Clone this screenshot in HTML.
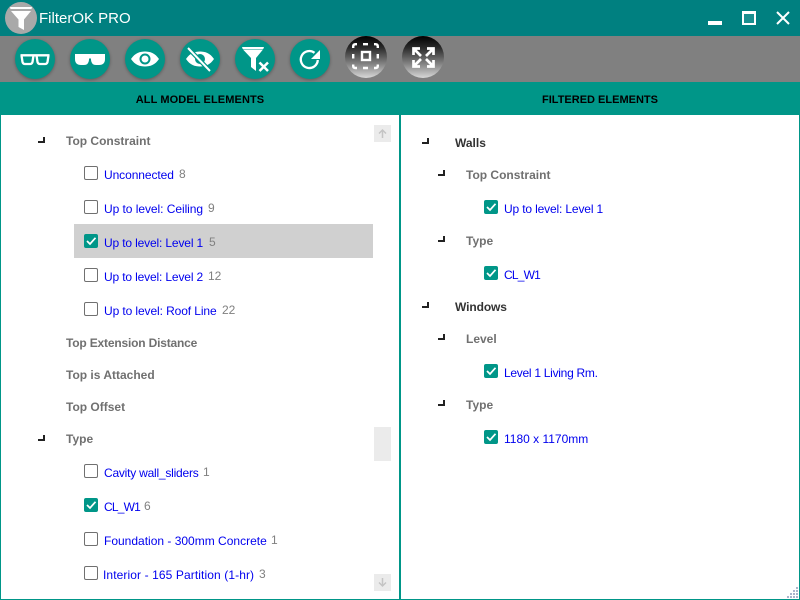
<!DOCTYPE html>
<html><head><meta charset="utf-8"><style>
html,body{margin:0;padding:0}
body{width:800px;height:600px;overflow:hidden;position:relative;background:#fff;font-family:"Liberation Sans",sans-serif}
div,span,svg{position:absolute}
.t{white-space:nowrap;font-size:12px;line-height:16px;color:#0000ee}
.n{white-space:nowrap;font-size:12px;line-height:16px;color:#808080}
.h{white-space:nowrap;font-size:12px;line-height:16px;color:#707070;font-weight:bold}
.k{white-space:nowrap;font-size:12px;line-height:16px;color:#333;font-weight:bold}
.c{width:12px;height:12px;border:1px solid #707070;border-radius:2px;background:#fff}
.d{width:14px;height:14px;background:#009688;border-radius:2px}
.a{width:7px;height:6px}
.b{width:40px;height:40px;border-radius:50%;background:#009688;top:39px;box-shadow:0 1px 3px rgba(0,0,0,.3)}
.g{width:42px;height:42px;border-radius:50%;top:36px;background:linear-gradient(#000 0%,#2a2a2a 28%,#808080 65%,#d8d8d8 100%)}
</style></head><body>
<div style="left:0;top:0;width:800px;height:36px;background:#008080"></div>
<div style="left:0;top:36px;width:800px;height:46px;background:#808080"></div>
<div style="left:0;top:82px;width:800px;height:33px;background:#009688"></div>
<div style="left:5px;top:2px;width:32px;height:32px;border-radius:50%;background:#a9a9a9"></div>
<svg style="left:5px;top:2px" width="32" height="32" viewBox="0 0 32 32"><path d="M5 5H27L26.500 7H5.500ZM6 9H26L19 17.500V28L13.500 25V17.500Z" fill="#fff"/></svg>
<div style="left:39px;top:9px;font-size:15px;line-height:20px;color:#fff;white-space:nowrap">FilterOK PRO</div>
<div style="left:708px;top:21px;width:14px;height:4px;background:#fff"></div>
<div style="left:742px;top:11px;width:10px;height:9px;border:2px solid #fff;border-top-width:3px;background:#1a8f8f"></div>
<svg style="left:776px;top:11px" width="14" height="14" viewBox="0 0 14 14"><path d="M1 1L13 13M13 1L1 13" stroke="#fff" stroke-width="2"/></svg>
<div class="b" style="left:15px"></div>
<svg style="left:15px;top:39px" width="40" height="40" viewBox="0 0 40 40"><path d="M5.500 16.300H34.500M6.500 16.300L7.500 23Q8 25 10 25H15Q17 25 17.500 23L18.500 16.300M33.500 16.300L32.500 23Q32 25 30 25H25Q23 25 22.500 23L21.500 16.300" fill="none" stroke="#fff" stroke-width="2.300"/></svg>
<div class="b" style="left:70px"></div>
<svg style="left:70px;top:39px" width="40" height="40" viewBox="0 0 40 40"><path d="M5 15H35V20Q35 26 29 26H26Q21.500 26 21 21V19.500H19V21Q18.500 26 14 26H11Q5 26 5 20Z" fill="#fff"/></svg>
<div class="b" style="left:125px"></div>
<svg style="left:125px;top:39px" width="40" height="40" viewBox="0 0 40 40"><path fill-rule="evenodd" d="M6 20C10 14 15 12.500 20 12.500S30 14 34 20C30 26 25 27.500 20 27.500S10 26 6 20ZM20 14.500A5.500 5.500 0 1 0 20 25.500A5.500 5.500 0 1 0 20 14.500Z" fill="#fff"/><circle cx="20" cy="20" r="3.500" fill="#fff"/></svg>
<div class="b" style="left:180px"></div>
<svg style="left:180px;top:39px" width="40" height="40" viewBox="0 0 40 40"><path fill-rule="evenodd" d="M6 20C10 14 15 12.500 20 12.500S30 14 34 20C30 26 25 27.500 20 27.500S10 26 6 20ZM20 15A5 5 0 1 0 20 25A5 5 0 1 0 20 15Z" fill="#fff"/><path d="M8 9L30 32" stroke="#009688" stroke-width="4.500"/><path d="M8 9L30 32" stroke="#fff" stroke-width="2"/></svg>
<div class="b" style="left:235px"></div>
<svg style="left:235px;top:39px" width="40" height="40" viewBox="0 0 40 40"><path d="M7 8H29L28.300 10H7.700ZM8 10.500H28L21 19V32L16 28V19Z" fill="#fff"/><path d="M24.500 23.500L33 32M33 23.500L24.500 32" stroke="#fff" stroke-width="2.500"/></svg>
<div class="b" style="left:290px"></div>
<svg style="left:290px;top:39px" width="40" height="40" viewBox="0 0 40 40"><path d="M24.500 13.800A8.500 8.500 0 1 0 27.800 21" fill="none" stroke="#fff" stroke-width="2.300"/><path d="M30 11V20H21Z" fill="#fff"/></svg>
<div class="g" style="left:345px"></div>
<svg style="left:345px;top:36px" width="42" height="42" viewBox="0 0 42 42"><path d="M8.200 12V10.500Q8.200 8.200 10.500 8.200H12M18 8.200H23M29 8.200H30.500Q32.800 8.200 32.800 10.500V12M32.800 18V22.500M32.800 28.500V30Q32.800 32 30.500 32H29M23 32H18M12 32H10.500Q8.200 32 8.200 30V28.500M8.200 22.500V18" fill="none" stroke="#fff" stroke-width="2.400"/><rect x="17" y="16" width="8" height="8" fill="none" stroke="#fff" stroke-width="2.400"/></svg>
<div class="g" style="left:402px"></div>
<svg style="left:402px;top:36px" width="42" height="42" viewBox="0 0 42 42" fill="none" stroke="#fff" stroke-width="2.700"><path d="M11.500 19V12.500H18M12 13L19 20M31.500 19V12.500H25M31 13L24 20M11.500 24V30.500H18M12 30L19 23M31.500 24V30.500H25M31 30L24 23"/></svg>
<div style="left:0;top:92px;width:400px;text-align:center;font-size:11px;line-height:16px;font-weight:bold;color:#000;letter-spacing:.1px">ALL MODEL ELEMENTS</div>
<div style="left:400px;top:92px;width:400px;text-align:center;font-size:11px;line-height:16px;font-weight:bold;color:#000">FILTERED ELEMENTS</div>
<div style="left:0;top:115px;width:1px;height:485px;background:#009688"></div>
<div style="left:799px;top:115px;width:1px;height:485px;background:#009688"></div>
<div style="left:0;top:599px;width:800px;height:1px;background:#009688"></div>
<div style="left:399px;top:115px;width:2px;height:485px;background:#009688"></div>
<div style="left:374px;top:125px;width:17px;height:17px;background:#ebebeb"></div>
<svg style="left:374px;top:125px" width="17" height="17" viewBox="0 0 17 17"><path d="M8.500 13V5M5 8.500L8.500 5L12 8.500" fill="none" stroke="#c4c4c4" stroke-width="1.500"/></svg>
<div style="left:374px;top:427px;width:17px;height:34px;background:#ebebeb"></div>
<div style="left:374px;top:574px;width:17px;height:17px;background:#ebebeb"></div>
<svg style="left:374px;top:574px" width="17" height="17" viewBox="0 0 17 17"><path d="M8.500 4V12M5 8.500L8.500 12L12 8.500" fill="none" stroke="#c4c4c4" stroke-width="1.500"/></svg>
<svg style="left:787px;top:587px" width="12" height="12" fill="#aab4cc"><rect x="9" y="0" width="2" height="2"/><rect x="6" y="3" width="2" height="2"/><rect x="9" y="3" width="2" height="2"/><rect x="3" y="6" width="2" height="2"/><rect x="6" y="6" width="2" height="2"/><rect x="9" y="6" width="2" height="2"/><rect x="0" y="9" width="2" height="2"/><rect x="3" y="9" width="2" height="2"/><rect x="6" y="9" width="2" height="2"/><rect x="9" y="9" width="2" height="2"/></svg>
<div style="left:74px;top:224px;width:299px;height:34px;background:#d0d0d0"></div>

<svg class="a" style="left:38px;top:137px" viewBox="0 0 7 6"><path d="M6 0V5H0" fill="none" stroke="#222" stroke-width="2"/></svg>
<div class="h" style="left:66px;top:133px">Top Constraint</div>
<div class="c" style="left:84px;top:166px"></div><div class="t" style="left:104px;top:167px;letter-spacing:-.08px">Unconnected</div><div class="n" style="left:179px;top:166px">8</div>
<div class="c" style="left:84px;top:200px"></div><div class="t" style="left:104px;top:201px;letter-spacing:-.05px">Up to level: Ceiling</div><div class="n" style="left:208px;top:200px">9</div>
<div class="d" style="left:84px;top:234px"></div><svg style="left:84px;top:234px" width="14" height="14"><path d="M3 7L6 10L11.500 3.800" fill="none" stroke="#fff" stroke-width="1.700"/></svg><div class="t" style="left:104px;top:235px;letter-spacing:-.15px">Up to level: Level 1</div><div class="n" style="left:209px;top:234px">5</div>
<div class="c" style="left:84px;top:268px"></div><div class="t" style="left:104px;top:269px;letter-spacing:-.15px">Up to level: Level 2</div><div class="n" style="left:208px;top:268px">12</div>
<div class="c" style="left:84px;top:302px"></div><div class="t" style="left:104px;top:303px;letter-spacing:-.1px">Up to level: Roof Line</div><div class="n" style="left:222px;top:302px">22</div>
<div class="h" style="left:66px;top:335px;letter-spacing:-.18px">Top Extension Distance</div>
<div class="h" style="left:66px;top:367px">Top is Attached</div>
<div class="h" style="left:66px;top:399px">Top Offset</div>
<svg class="a" style="left:38px;top:435px" viewBox="0 0 7 6"><path d="M6 0V5H0" fill="none" stroke="#222" stroke-width="2"/></svg>
<div class="h" style="left:66px;top:431px">Type</div>
<div class="c" style="left:84px;top:464px"></div><div class="t" style="left:104px;top:465px;letter-spacing:-.22px">Cavity wall_sliders</div><div class="n" style="left:203px;top:464px">1</div>
<div class="d" style="left:84px;top:498px"></div><svg style="left:84px;top:498px" width="14" height="14"><path d="M3 7L6 10L11.500 3.800" fill="none" stroke="#fff" stroke-width="1.700"/></svg><div class="t" style="left:104px;top:499px;letter-spacing:-.8px">CL_W1</div><div class="n" style="left:144px;top:498px">6</div>
<div class="c" style="left:84px;top:532px"></div><div class="t" style="left:104px;top:533px">Foundation - 300mm Concrete</div><div class="n" style="left:271px;top:532px">1</div>
<div class="c" style="left:84px;top:566px"></div><div class="t" style="left:103px;top:567px;letter-spacing:.1px">Interior - 165 Partition (1-hr)</div><div class="n" style="left:259px;top:566px">3</div>

<svg class="a" style="left:422px;top:138px" viewBox="0 0 7 6"><path d="M6 0V5H0" fill="none" stroke="#222" stroke-width="2"/></svg>
<div class="k" style="left:455px;top:135px">Walls</div>
<svg class="a" style="left:438px;top:170px" viewBox="0 0 7 6"><path d="M6 0V5H0" fill="none" stroke="#222" stroke-width="2"/></svg>
<div class="h" style="left:466px;top:167px">Top Constraint</div>
<div class="d" style="left:484px;top:200px"></div><svg style="left:484px;top:200px" width="14" height="14"><path d="M3 7L6 10L11.500 3.800" fill="none" stroke="#fff" stroke-width="1.700"/></svg><div class="t" style="left:504px;top:201px;letter-spacing:-.15px">Up to level: Level 1</div>
<svg class="a" style="left:438px;top:236px" viewBox="0 0 7 6"><path d="M6 0V5H0" fill="none" stroke="#222" stroke-width="2"/></svg>
<div class="h" style="left:466px;top:233px">Type</div>
<div class="d" style="left:484px;top:266px"></div><svg style="left:484px;top:266px" width="14" height="14"><path d="M3 7L6 10L11.500 3.800" fill="none" stroke="#fff" stroke-width="1.700"/></svg><div class="t" style="left:504px;top:267px;letter-spacing:-.8px">CL_W1</div>
<svg class="a" style="left:422px;top:302px" viewBox="0 0 7 6"><path d="M6 0V5H0" fill="none" stroke="#222" stroke-width="2"/></svg>
<div class="k" style="left:455px;top:299px;letter-spacing:-.1px">Windows</div>
<svg class="a" style="left:438px;top:334px" viewBox="0 0 7 6"><path d="M6 0V5H0" fill="none" stroke="#222" stroke-width="2"/></svg>
<div class="h" style="left:466px;top:331px">Level</div>
<div class="d" style="left:484px;top:364px"></div><svg style="left:484px;top:364px" width="14" height="14"><path d="M3 7L6 10L11.500 3.800" fill="none" stroke="#fff" stroke-width="1.700"/></svg><div class="t" style="left:504px;top:365px;letter-spacing:-.28px">Level 1 Living Rm.</div>
<svg class="a" style="left:438px;top:400px" viewBox="0 0 7 6"><path d="M6 0V5H0" fill="none" stroke="#222" stroke-width="2"/></svg>
<div class="h" style="left:466px;top:397px">Type</div>
<div class="d" style="left:484px;top:430px"></div><svg style="left:484px;top:430px" width="14" height="14"><path d="M3 7L6 10L11.500 3.800" fill="none" stroke="#fff" stroke-width="1.700"/></svg><div class="t" style="left:504px;top:431px">1180 x 1170mm</div>
</body></html>
